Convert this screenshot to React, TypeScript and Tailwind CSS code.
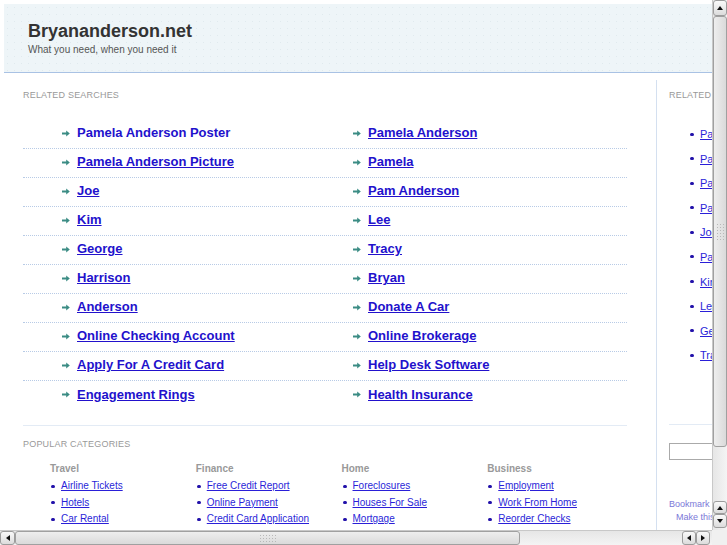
const searches: [string, string][] = [
  ["Pamela Anderson Poster", "Pamela Anderson"],
  ["Pamela Anderson Picture", "Pamela"],
  ["Joe", "Pam Anderson"],
  ["Kim", "Lee"],
  ["George", "Tracy"],
  ["Harrison", "Bryan"],
  ["Anderson", "Donate A Car"],
  ["Online Checking Account", "Online Brokerage"],
  ["Apply For A Credit Card", "Help Desk Software"],
  ["Engagement Rings", "Health Insurance"],
];

const categories = [
  { title: "Travel", links: ["Airline Tickets", "Hotels", "Car Rental"] },
  { title: "Finance", links: ["Free Credit Report", "Online Payment", "Credit Card Application"] },
  { title: "Home", links: ["Foreclosures", "Houses For Sale", "Mortgage"] },
  { title: "Business", links: ["Employment", "Work From Home", "Reorder Checks"] },
];

const sidebar = [
  "Pamela Anderson Poster",
  "Pamela Anderson Picture",
  "Pamela Anderson",
  "Pamela",
  "Joe",
  "Pam Anderson",
  "Kim",
  "Lee",
  "George",
  "Tracy",
];

function Arrow() {
  return (
    <svg width="8" height="7" viewBox="0 0 8 7" className="shrink-0">
      <path d="M0 2.6h4.2V0.4L7.8 3.5 4.2 6.6V4.4H0z" fill="#3b8c84" />
    </svg>
  );
}

function Tri({ dir }: { dir: "up" | "down" | "left" | "right" }) {
  const d = {
    up: "M1 6h6L4 2z",
    down: "M1 2h6L4 6z",
    left: "M6 1v6L2 4z",
    right: "M2 1v6l4-3z",
  }[dir];
  return (
    <svg width="8" height="8" viewBox="0 0 8 8">
      <path d={d} fill="#111" />
    </svg>
  );
}

function Grip({ vertical }: { vertical?: boolean }) {
  return (
    <div className={vertical ? "grid grid-cols-3 gap-[2px]" : "grid grid-cols-6 gap-[2px]"}>
      {Array.from({ length: 18 }).map((_, i) => (
        <span key={i} className="w-[1px] h-[1px] bg-[#b8b8b8]" />
      ))}
    </div>
  );
}

function SbButton({ dir, className }: { dir: "up" | "down" | "left" | "right"; className: string }) {
  return (
    <div
      className={`flex items-center justify-center border border-[#9c9c9c] rounded-[3px] bg-gradient-to-b from-[#fafafa] to-[#dcdcdc] ${className}`}
    >
      <Tri dir={dir} />
    </div>
  );
}

export default function App() {
  return (
    <div className="w-[727px] h-[545px] overflow-hidden flex flex-col bg-white font-['Liberation_Sans',Arial,sans-serif]">
      <div className="flex h-[530px]">
        {/* page */}
        <div className="w-[712px] overflow-hidden pt-[4px] pl-[4px]">
          <div className="w-[900px]">
            {/* Header */}
            <div className="h-[69px] bg-[#eef5f8] bg-[radial-gradient(#e0eaee_0.6px,transparent_0.6px)] bg-[length:7px_7px] border-b border-[#a9c2e4] pl-[24px] pt-[16px]">
              <h1 className="text-[18px] leading-[22px] font-bold text-[#333]">Bryananderson.net</h1>
              <p className="text-[10px] leading-[12px] text-[#555] mt-[2px]">What you need, when you need it</p>
            </div>

            <div className="flex">
              {/* Main */}
              <div className="w-[652px] shrink-0 pl-[19px]">
                <div className="w-[604px]">
                  <h2 className="mt-[17px] text-[9px] leading-[11px] tracking-[0.2px] text-[#999]">RELATED SEARCHES</h2>

                  <div className="mt-[19px]">
                    {searches.map(([a, b], i) => (
                      <div
                        key={a}
                        className={`grid grid-cols-[291px_1fr] h-[29px] ${
                          i < searches.length - 1 ? "border-b border-dotted border-[#b8cbe6]" : ""
                        }`}
                      >
                        {[a, b].map((t, j) => (
                          <div key={t} className="flex items-center pl-[39px] pb-[2px]">
                            <Arrow />
                            <a
                              href="#"
                              className={`ml-[7px] text-[13px] font-bold text-[#2211cc] ${
                                i === 0 && j === 0 ? "no-underline" : "underline"
                              }`}
                            >
                              {t}
                            </a>
                          </div>
                        ))}
                      </div>
                    ))}
                  </div>

                  <div className="mt-[15px] border-t border-[#e3ebf5]" />

                  <h2 className="mt-[13px] text-[9px] leading-[11px] tracking-[0.2px] text-[#999]">POPULAR CATEGORIES</h2>

                  <div className="mt-[13px] ml-[27px] w-[583px] grid grid-cols-4">
                    {categories.map((c) => (
                      <div key={c.title}>
                        <h3 className="text-[10px] leading-[12px] font-bold text-[#999]">{c.title}</h3>
                        <ul className="mt-[5px] space-y-[4.5px]">
                          {c.links.map((l) => (
                            <li key={l} className="flex items-center h-[12px]">
                              <span className="w-[4px] h-[3px] rounded-full bg-[#2211aa] ml-[1px]" />
                              <a href="#" className="ml-[6px] text-[10px] leading-[12px] text-[#2a1fd8] underline">
                                {l}
                              </a>
                            </li>
                          ))}
                        </ul>
                      </div>
                    ))}
                  </div>
                </div>
              </div>

              {/* Sidebar */}
              <div className="mt-[7px] w-[220px] shrink-0 border-l border-[#d4e0f0] pl-[12px] h-[460px]">
                <h2 className="mt-[10px] text-[9px] leading-[11px] tracking-[0.2px] text-[#999]">RELATED SEARCHES</h2>
                <ul className="mt-[27px] space-y-[12.6px]">
                  {sidebar.map((s) => (
                    <li key={s} className="flex items-center h-[12px] pl-[21px]">
                      <span className="w-[4px] h-[3px] rounded-full bg-[#2211aa]" />
                      <a href="#" className="ml-[6px] text-[11px] leading-[12px] text-[#2a1fd8] underline whitespace-nowrap">
                        {s}
                      </a>
                    </li>
                  ))}
                </ul>
                <div className="mt-[63px] border-t border-[#e3ebf5] w-[170px]" />
                <input className="mt-[18px] block w-[150px] h-[17px] border border-[#aaa] bg-white" />
                <p className="mt-[38px] text-[9px] leading-[12px] text-[#7b78d8]">Bookmark this page</p>
                <p className="mt-[1px] ml-[7px] text-[9px] leading-[12px] text-[#7b78d8]">Make this your homepage</p>
              </div>
            </div>
          </div>
        </div>

        {/* vertical scrollbar */}
        <div className="w-[15px] flex flex-col bg-gradient-to-r from-[#e6e6e6] to-[#f4f4f4] border-l border-[#c8c8c8]">
          <SbButton dir="up" className="h-[16px]" />
          <div className="h-[431px] border border-[#a0a0a0] rounded-[3px] bg-gradient-to-r from-[#eeeeee] to-[#dadada] flex items-center justify-center">
            <Grip vertical />
          </div>
          <div className="flex-1" />
          <SbButton dir="up" className="h-[13px]" />
          <SbButton dir="down" className="h-[14px] mb-[2px]" />
        </div>
      </div>

      {/* horizontal scrollbar */}
      <div className="flex h-[15px]">
        <div className="w-[712px] flex bg-gradient-to-b from-[#e6e6e6] to-[#f4f4f4] border-t border-[#c8c8c8]">
          <SbButton dir="left" className="w-[15px]" />
          <div className="w-[505px] border border-[#a0a0a0] rounded-[3px] bg-gradient-to-b from-[#eeeeee] to-[#dadada] flex items-center justify-center">
            <Grip />
          </div>
          <div className="flex-1" />
          <SbButton dir="left" className="w-[14px]" />
          <SbButton dir="right" className="w-[14px] mr-[2px]" />
        </div>
        <div className="w-[15px] bg-[#f0f0f0]" />
      </div>
    </div>
  );
}
